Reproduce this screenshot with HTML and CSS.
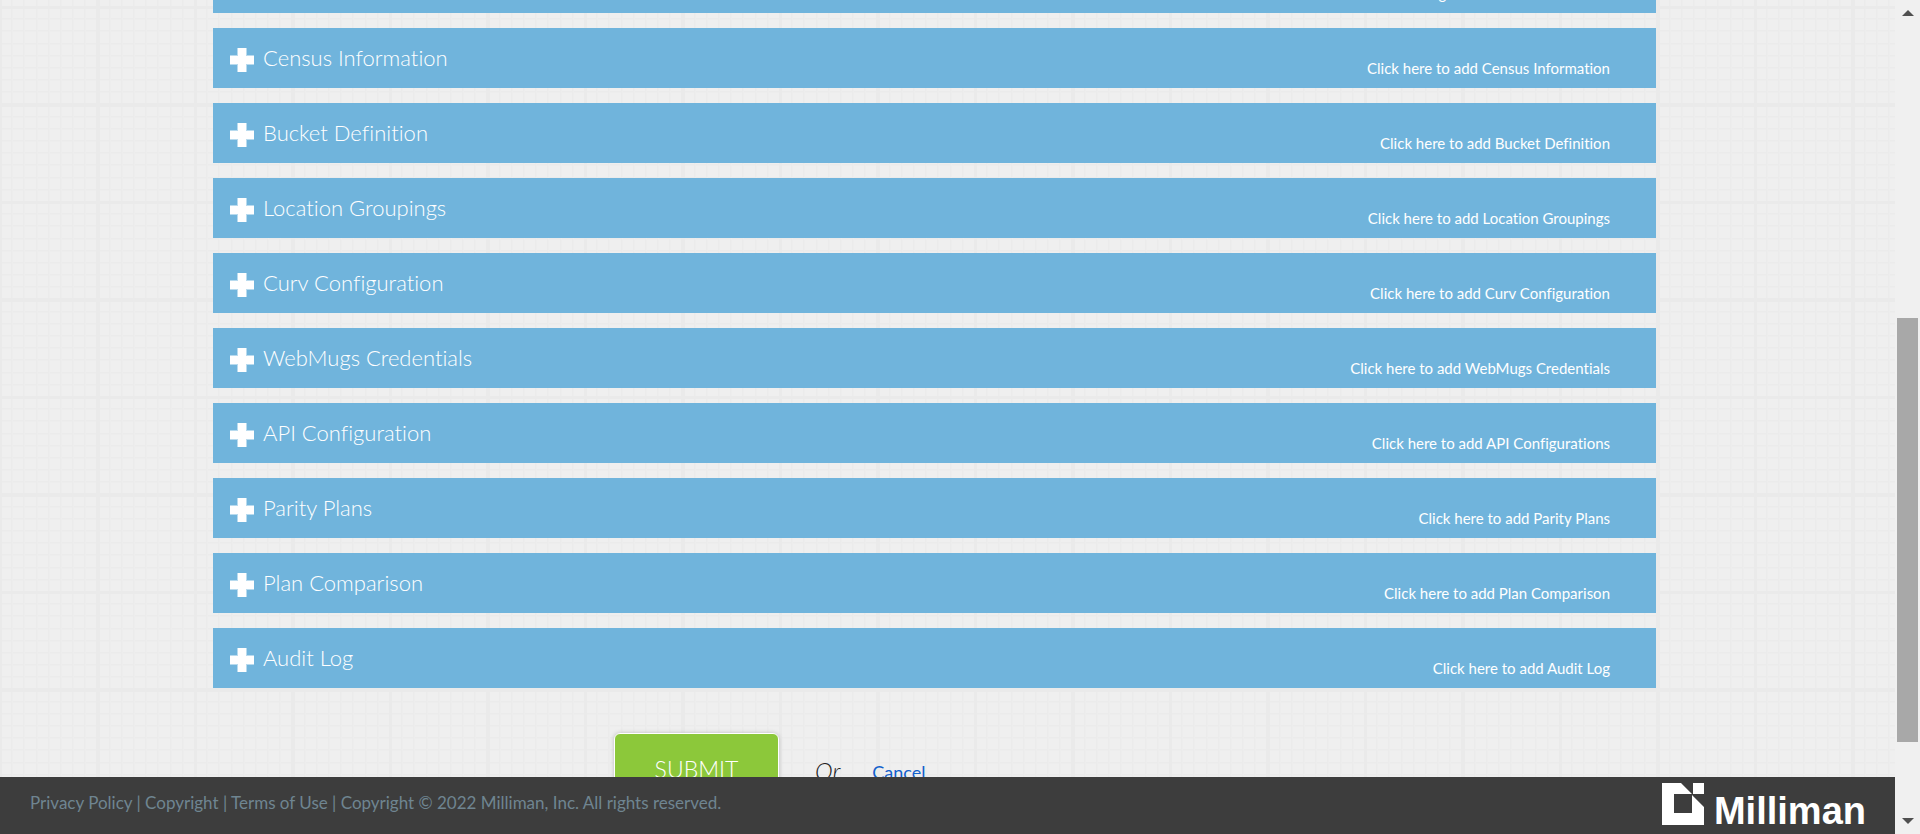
FILE: index.html
```html
<!DOCTYPE html>
<html lang="en">
<head>
<meta charset="utf-8">
<title>Milliman</title>
<link rel="stylesheet" href="styles.css">
</head>
<body>
<svg class="defs" aria-hidden="true"><symbol id="plus" viewBox="0 0 24 24"><path d="M7 0h10v7h7v10h-7v7H7v-7H0V7h7z" fill="#b7daee"/><path d="M8 0h8v8h8v8h-8v8H8v-8H0V8h8z" fill="#fff"/></symbol></svg>
<div class="page">
  <main class="content">
    <div class="sections">
      <button class="section" type="button"><svg class="plus"><use href="#plus"/></svg><span class="title">Enrollment Information</span><span class="hint">Click here to manage Enrollment Information</span></button>
      <button class="section" type="button"><svg class="plus"><use href="#plus"/></svg><span class="title">Census Information</span><span class="hint">Click here to add Census Information</span></button>
      <button class="section" type="button"><svg class="plus"><use href="#plus"/></svg><span class="title">Bucket Definition</span><span class="hint">Click here to add Bucket Definition</span></button>
      <button class="section" type="button"><svg class="plus"><use href="#plus"/></svg><span class="title">Location Groupings</span><span class="hint">Click here to add Location Groupings</span></button>
      <button class="section" type="button"><svg class="plus"><use href="#plus"/></svg><span class="title">Curv Configuration</span><span class="hint">Click here to add Curv Configuration</span></button>
      <button class="section" type="button"><svg class="plus"><use href="#plus"/></svg><span class="title">WebMugs Credentials</span><span class="hint">Click here to add WebMugs Credentials</span></button>
      <button class="section" type="button"><svg class="plus"><use href="#plus"/></svg><span class="title">API Configuration</span><span class="hint">Click here to add API Configurations</span></button>
      <button class="section" type="button"><svg class="plus"><use href="#plus"/></svg><span class="title">Parity Plans</span><span class="hint">Click here to add Parity Plans</span></button>
      <button class="section" type="button"><svg class="plus"><use href="#plus"/></svg><span class="title">Plan Comparison</span><span class="hint">Click here to add Plan Comparison</span></button>
      <button class="section" type="button"><svg class="plus"><use href="#plus"/></svg><span class="title">Audit Log</span><span class="hint">Click here to add Audit Log</span></button>
    </div>
    <div class="actions">
      <button class="submit" type="submit">SUBMIT</button>
      <em class="or">Or</em>
      <a class="cancel" href="#">Cancel</a>
    </div>
  </main>
  <footer class="footer">
    <div class="legal"><a href="#">Privacy Policy</a> | <a href="#">Copyright</a> | <a href="#">Terms of Use</a> | Copyright © 2022 Milliman, Inc. All rights reserved.</div>
    <div class="brand">
      <svg class="mark" viewBox="0 0 42 42" aria-hidden="true"><path d="M0 0h19l11 11H12v19h18V12l12 12v18H0z" fill="#fff"/><path d="M31 0h11v11H31z" fill="#fff"/></svg>
      <span class="brand-name">Milliman</span>
    </div>
  </footer>
</div>
<div class="scrollbar" aria-hidden="true">
  <svg class="arrow" viewBox="0 0 25 25"><path d="M7 16h12l-6-6z" fill="#505050"/></svg>
  <div class="track"><div class="thumb"></div></div>
  <svg class="arrow" viewBox="0 0 25 25"><path d="M7 9h12l-6 6z" fill="#505050"/></svg>
</div>
</body>
</html>
```
FILE: styles.css
```css
* { box-sizing: border-box; }
body {
  margin: 0;
  height: 100vh;
  display: grid;
  grid-template-columns: 1fr 25px;
  overflow: hidden;
  font-family: "Lato", "Open Sans", sans-serif;
  font-weight: 300;
  font-variant-ligatures: none;
}
.defs { display: none; }
.page {
  display: flex;
  flex-direction: column;
  height: 100vh;
  min-width: 0;
}
.content {
  flex: 1;
  min-height: 0;
  overflow: hidden;
  padding: 0 239px 0 213px;
  background-color: #efefef;
  background-image:
    repeating-linear-gradient(90deg, #eaeaea 0 3px, transparent 3px 50%),
    repeating-linear-gradient(#eaeaea 0 3px, transparent 3px 50%),
    repeating-linear-gradient(90deg, #ebebeb 0 1px, #ededed 1px 2px, transparent 2px 6.25%),
    repeating-linear-gradient(#ebebeb 0 1px, #ededed 1px 2px, transparent 2px 6.25%);
  background-size: 195px 195px;
  background-position: -1px 6px;
}
.sections {
  display: flex;
  flex-direction: column;
  gap: 15px;
  margin-top: -47px;
}
.section {
  display: flex;
  align-items: flex-start;
  height: 60px;
  padding: 0 46px 0 17px;
  border: 0;
  background: #70b4dc;
  color: #fff;
  font: inherit;
  font-variant-ligatures: none;
  text-align: left;
  cursor: pointer;
}
.plus {
  width: 24px;
  height: 24px;
  margin-top: 20px;
}
.title {
  flex: 1;
  margin: 14px 0 0 9px;
  font-size: 22px;
  line-height: 31px;
}
.hint {
  margin-top: 30px;
  font-size: 15px;
  font-weight: 400;
  line-height: 20px;
}
.actions {
  display: flex;
  align-items: center;
  height: 74px;
  margin: 45px 0 0 401px;
}
.submit {
  width: 165px;
  height: 74px;
  padding-bottom: 4px;
  border: 1px solid #fff;
  border-radius: 6px;
  background: #8cc83a;
  box-shadow: 0 0 4px #bbb;
  color: #fff;
  font: inherit;
  font-size: 23px;
}
.or {
  margin-left: 36px;
  font-size: 24px;
  color: #222;
}
.cancel {
  margin-left: 32px;
  padding-top: 4px;
  color: #1260cc;
  font-size: 18px;
  font-weight: 400;
  text-decoration: none;
}
.footer {
  display: flex;
  justify-content: space-between;
  height: 57px;
  padding: 0 29px 0 30px;
  background: #3d3d3d;
  color: #6f8591;
}
.legal {
  padding-top: 13px;
  font-size: 17px;
  font-weight: 400;
  line-height: 26px;
}
.legal a { color: inherit; text-decoration: none; }
.brand {
  display: flex;
  gap: 10px;
  padding-top: 6px;
}
.mark { width: 42px; height: 42px; }
.brand-name {
  padding-top: 6px;
  color: #fff;
  font-family: "Liberation Sans", Arial, sans-serif;
  font-size: 38px;
  font-weight: 700;
  line-height: 44px;
}
.scrollbar {
  display: flex;
  flex-direction: column;
  height: 100vh;
  background: #f0f0f0;
}
.arrow { width: 25px; height: 25px; }
.track { flex: 1; padding: 0 2px; }
.thumb {
  height: 54%;
  background: #a8a8a8;
}
.track::before {
  content: "";
  display: block;
  height: 37.4%;
}
```
